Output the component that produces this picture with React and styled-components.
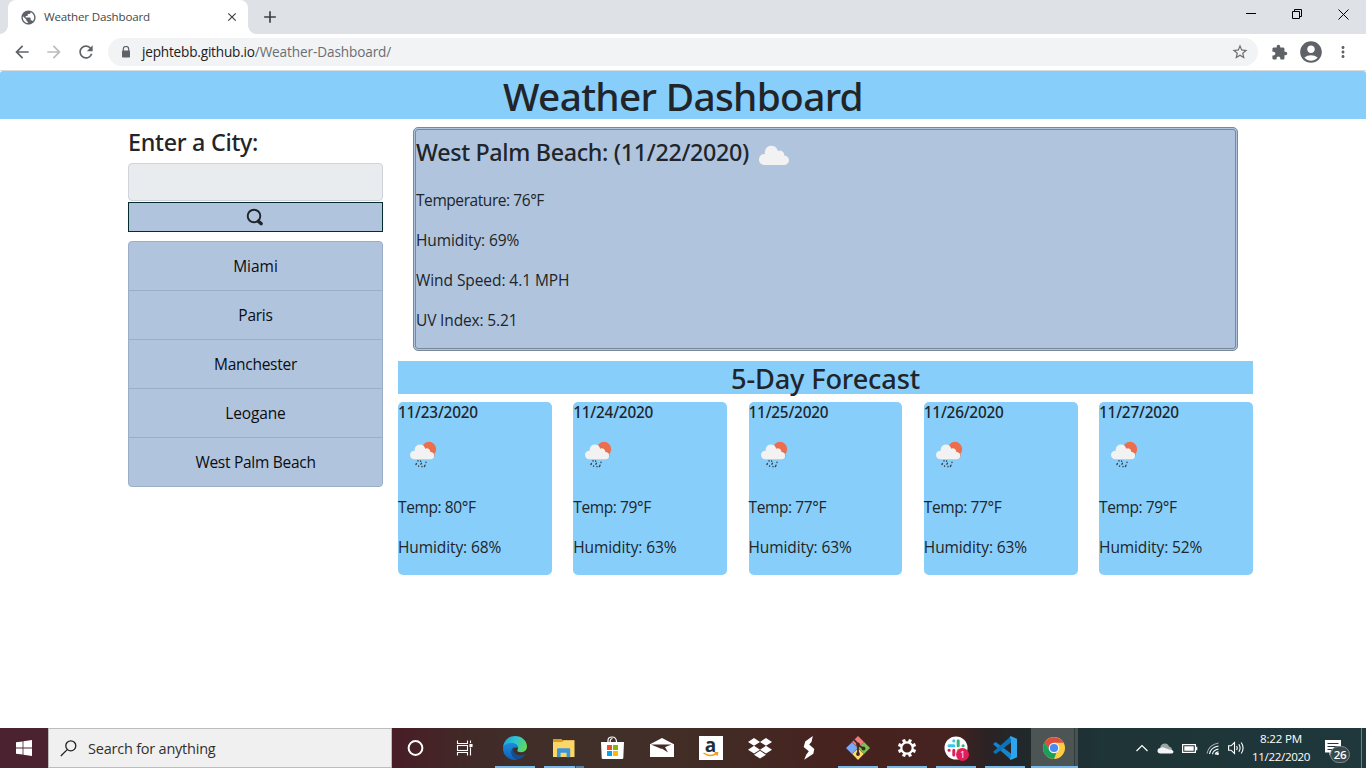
import React from "react";
import styled, { createGlobalStyle } from "styled-components";
import {
  MdArrowBack, MdArrowForward, MdRefresh, MdStarBorder, MdExtension,
  MdAccountCircle, MdMoreVert, MdClose, MdAdd, MdPublic,
} from "react-icons/md";

const GlobalStyle = createGlobalStyle`
  *, *::before, *::after { box-sizing: border-box; }
  body {
    margin: 0;
    background: #fff;
    color: #212529;
    font-family: "Open Sans", "Noto Sans", sans-serif;
    overflow: hidden;
  }
  h1, h2, h3, h5, p, ul { margin: 0; padding: 0; }
  svg { display: block; flex: none; }
`;

const Screen = styled.div`
  width: 1366px;
  height: 768px;
  display: flex;
  flex-direction: column;
`;

const Text = styled.span`
  display: inline-block;
  white-space: nowrap;
  letter-spacing: ${(p) => p.$track || 0}px;
`;

/* ---------- browser chrome ---------- */

const TabStrip = styled.div`
  height: 34px;
  background: #dee1e6;
  display: flex;
  align-items: flex-start;
  padding-left: 8px;
`;

const Tab = styled.div`
  position: relative;
  width: 240px;
  height: 34px;
  background: #fff;
  border-radius: 8px 8px 0 0;
  display: flex;
  align-items: center;
  padding: 0 9px 0 12px;
  font-size: 11.6px;
  color: #45494d;

  &::before, &::after {
    content: "";
    position: absolute;
    bottom: 0;
    width: 8px;
    height: 8px;
  }
  &::before { left: -8px; background: radial-gradient(circle at 0 0, transparent 7.5px, #fff 8px); }
  &::after { right: -8px; background: radial-gradient(circle at 100% 0, transparent 7.5px, #fff 8px); }
`;

const TabTitle = styled(Text)`
  flex: 1;
  padding: 0 0 1px 7px;
`;

const NewTab = styled.div`
  height: 34px;
  padding-left: 12px;
  display: flex;
  align-items: center;
  color: #3c4043;
`;

const WindowButtons = styled.div`
  margin-left: auto;
  display: flex;
  height: 28px;
`;

const WindowButton = styled.div`
  width: 46px;
  display: flex;
  align-items: center;
  justify-content: center;
`;

const Toolbar = styled.div`
  height: 37px;
  border-bottom: 1px solid #d9dbdd;
  display: flex;
  align-items: center;
  padding: 0 12px;
  color: #5f6368;
`;

const NavButton = styled.div`
  width: 32px;
  color: ${(p) => (p.$off ? "#babcbe" : "#5f6368")};
`;

const AddressBar = styled.div`
  width: 1150px;
  height: 28px;
  border-radius: 14px;
  background: #f1f3f4;
  display: flex;
  align-items: center;
  padding: 0 9px 0 13px;
  font-size: 13.6px;
  color: #6a6e73;
`;

const Url = styled.div`
  flex: 1;
  padding: 0 0 1px 11px;
  display: flex;
`;

const Host = styled(Text)`
  color: #202124;
`;

const ToolbarEnd = styled.div`
  flex: 1;
  display: flex;
  align-items: center;
  padding-left: 13px;
`;

const Avatar = styled.div`
  padding: 0 10px;
`;

/* ---------- page ---------- */

const Page = styled.main`
  height: 657px;
`;

const Banner = styled.h1`
  height: 48px;
  margin-bottom: 8px;
  background: #87cefa;
  border-radius: 3px 3px 0 0;
  text-align: center;
  font: 500 38.8px/51px "Noto Sans", sans-serif;
`;

const Columns = styled.div`
  display: flex;
  gap: 15px;
  padding: 0 113px 0 128px;
`;

const Sidebar = styled.aside`
  width: 255px;
`;

const SidebarTitle = styled.h3`
  height: 36px;
  font: 500 23.3px/31px "Noto Sans", sans-serif;
`;

const CityInput = styled.input`
  display: block;
  width: 100%;
  height: 38px;
  border: 1px solid #ced4da;
  border-radius: 4px;
  background: #e9ecef;
  outline: none;
`;

const SearchButton = styled.button`
  display: flex;
  align-items: center;
  justify-content: center;
  width: 100%;
  height: 30px;
  margin: 1px 0 9px;
  padding: 0 2px 0 0;
  border: 1px solid #052a2f;
  background: #b0c4de;
`;

const CityList = styled.ul`
  list-style: none;
  border: 1px solid #9cadc7;
  border-radius: 4px;
  background: #b0c4de;
  overflow: hidden;
`;

const City = styled.li`
  height: 49px;
  border-bottom: 1px solid #9cadc7;
  text-align: center;
  color: #0b0d10;
  font-size: 15.5px;
  line-height: 48px;

  &:last-child { height: 48px; border-bottom: 0; }
`;

const Content = styled.section`
  flex: 1;
`;

const Current = styled.div`
  height: 224px;
  margin: 0 15px 10px;
  border: 3px double #778899;
  border-radius: 5px;
  background: #b0c4de;
`;

const CurrentTitle = styled.h3`
  display: flex;
  align-items: flex-start;
  height: 58px;
  font: 500 23.3px/45px "Noto Sans", sans-serif;
`;

const Reading = styled.p`
  margin-bottom: 16px;
  font-size: 15.5px;
  line-height: 24px;
`;

const ForecastTitle = styled.h2`
  height: 33px;
  margin-bottom: 8px;
  background: #87cefa;
  text-align: center;
  font: 500 27.2px/36px "Noto Sans", sans-serif;
`;

const Forecast = styled.div`
  display: flex;
  justify-content: space-between;
`;

const DayCard = styled.div`
  width: 18%;
  height: 173px;
  background: #87cefa;
  border-radius: 5px;
`;

const DayDate = styled.h5`
  height: 27px;
  font: 500 15.3px/21px "Noto Sans", sans-serif;
`;

const DayIcon = styled.div`
  height: 66px;
`;

/* ---------- taskbar ---------- */

const Taskbar = styled.footer`
  height: 40px;
  display: flex;
  color: #fff;
  background: linear-gradient(90deg, #4c2230 0, #4a2230 48px, #491d26 392px, #402b28 480px, #41302a 600px,
    #432a24 740px, #47221f 830px, #45231f 950px, #2c2224 985px, #20292b 1030px, #1e3437 1100px, #1f383b 1366px);
`;

const StartButton = styled.div`
  width: 48px;
  display: flex;
  align-items: center;
  justify-content: center;
`;

const SearchBox = styled.div`
  width: 344px;
  border: 1px solid #bcbcbc;
  background: #f0f0f0;
  color: #303030;
  display: flex;
  align-items: center;
  gap: 11px;
  padding-left: 11px;
  font-size: 14.5px;
`;

const AppSlot = styled.div`
  position: relative;
  width: 49px;
  display: flex;
  align-items: center;
  justify-content: center;
  background: ${(p) => (p.$active ? "linear-gradient(90deg, transparent 2px, #4d5554 2px 45px, #2f3b3c 45px 46px, #465352 46px)" : "none")};

  &::after {
    content: "";
    position: absolute;
    bottom: 0;
    left: ${(p) => (p.$active ? 2 : 5)}px;
    width: ${(p) => (p.$active ? 47 : 40)}px;
    height: 2px;
    background: ${(p) => (p.$stacked ? "linear-gradient(90deg, #76b9ed 31px, #2f4c66 31px 32px, #527fa6 32px)" : "#76b9ed")};
    display: ${(p) => (p.$open || p.$active ? "block" : "none")};
  }
`;

const AmazonTile = styled.div`
  position: relative;
  width: 24px;
  height: 24px;
  background: #fff;
  color: #1f2f3e;
  text-align: center;
  font: 700 19px/18px "Open Sans", sans-serif;

  svg { position: absolute; left: 4px; top: 16px; }
`;

const Badge = styled.span`
  position: absolute;
  left: 25px;
  top: 20px;
  width: 13px;
  height: 13px;
  border-radius: 50%;
  background: #e01e5a;
  text-align: center;
  font-size: 9px;
  line-height: 13px;
`;

const Tray = styled.div`
  margin-left: auto;
  display: flex;
  align-items: center;
`;

const Clock = styled.div`
  width: 60px;
  margin-left: 6px;
  text-align: center;
  font-size: 11.6px;
  line-height: 18px;
  padding-bottom: 1px;
`;

const Notifications = styled.div`
  position: relative;
  width: 16px;
  margin: 0 20px 0 14px;
`;

const NoticeCount = styled.span`
  position: absolute;
  left: 5px;
  top: 6px;
  width: 20px;
  height: 17px;
  border: 1px solid #7f8b8c;
  border-radius: 8.5px;
  background: #39494b;
  text-align: center;
  font-size: 11.5px;
  font-weight: 600;
  line-height: 15px;
  letter-spacing: -0.3px;
`;

const ShowDesktop = styled.div`
  width: 5px;
  height: 40px;
  border-left: 1px solid #718082;
`;

/* ---------- drawings ---------- */

const cloudPath =
  "M5.8 20A5.4 5.4 0 0 1 0 14.2A5.3 5.3 0 0 1 6 9Q5.4 7.6 6.2 5.2A6.5 6.5 0 0 1 18.4 4.8Q19 5.6 19 6.2A4.2 4.2 0 0 1 25.2 10.6A4.8 4.8 0 0 1 30 15.4A4.7 4.7 0 0 1 25.4 20Z";

const CloudIcon = () => (
  <svg width="30" height="20" viewBox="0 0 30 20">
    <path d={cloudPath} fill="#f2f2f2" />
  </svg>
);

const CloudBox = styled.span`
  padding: 15px 0 0 10px;
`;

const RainIcon = () => (
  <svg width="50" height="50" viewBox="0 0 50 50">
    <circle cx="31" cy="20" r="7.2" fill="#ec6e4c" />
    <path d="M23.6 18.5Q26 17 28.5 20Q32 18.5 34 22Q37 24 36.6 27.5L24 26Z" fill="#ec6e4c" />
    <path transform="translate(12 15) scale(.805 .76)" d={cloudPath} fill="#f2f2f2" />
    <path d="M20 31.600v.4M18.400 34.600l-.4.900M20.600 37v.3M23.400 34.200l-.5 1M24 37.500v.2M28 33.300v.3M27 36.200l-.6 1.300M22.600 32v.2"
      stroke="#3b4047" strokeWidth="1.400" strokeLinecap="round" fill="none" />
  </svg>
);

const SearchGlyph = () => (
  <svg width="18" height="18" viewBox="0 0 18 18" fill="none" stroke="#212529">
    <circle cx="8" cy="8" r="6.3" strokeWidth="1.9" />
    <path d="M12.3 13.2L15.2 15.6" strokeWidth="3.4" strokeLinecap="round" />
  </svg>
);

const LockIcon = () => (
  <svg width="10" height="12" viewBox="0 0 10 12">
    <path d="M2.3 5V3.1a2.7 2.7 0 0 1 5.4 0V5" fill="none" stroke="#5f6368" strokeWidth="1.2" />
    <rect x="1" y="4.6" width="8" height="7" rx=".8" fill="#5f6368" />
  </svg>
);

const WindowsLogo = () => (
  <svg width="16" height="16" viewBox="0 0 16 16" fill="#fff">
    <path d="M0 2.3L6.6 1.4V7.5H0ZM7.4 1.2L16 0V7.5H7.4ZM0 8.4H6.6V14.6L0 13.7ZM7.4 8.4H16V16L7.4 14.8Z" />
  </svg>
);

const TaskSearchIcon = () => (
  <svg width="17" height="17" viewBox="0 0 17 17" fill="none" stroke="#222" strokeWidth="1.3">
    <circle cx="10.8" cy="5.8" r="5" />
    <path d="M7.2 9.6L.8 16" />
  </svg>
);

const CortanaIcon = () => (
  <svg width="19" height="18" viewBox="0 0 19 18" fill="none" stroke="#fff">
    <circle cx="8.500" cy="9" r="6.9" strokeWidth="2" />
  </svg>
);

const TaskViewIcon = () => (
  <svg width="19" height="16" viewBox="0 0 19 16" fill="none" stroke="#fff" strokeWidth="1.1">
    <path d="M1.500 .5V3.500H11.500V.5M1.500 15.5V12.500H11.500V15.5" />
    <rect x="1.500" y="5.500" width="10" height="5" />
    <path d="M14.500 .5V3M14.500 7.500V15.5" />
    <rect x="14" y="4.500" width="2" height="2" fill="#fff" />
  </svg>
);

const EdgeIcon = () => (
  <svg width="24" height="24" viewBox="0 0 24 24">
    <defs>
      <linearGradient id="edgeTop" x1="0" x2="1" y1=".2" y2=".5">
        <stop offset="0" stopColor="#1fa0dc" /><stop offset=".5" stopColor="#2fc3d3" /><stop offset="1" stopColor="#5fd95a" />
      </linearGradient>
      <linearGradient id="edgeLow" x1="0" x2="0" y1="0" y2="1">
        <stop offset="0" stopColor="#1b8ddb" /><stop offset="1" stopColor="#0f5fb4" />
      </linearGradient>
    </defs>
    <path d="M0 11.5C.6 5 5.500 0 12 0C19 0 24 5 24 10.500C24 14 21.500 16.200 18.300 16.200C15.500 16.200 14 15.200 14.300 14.200C16 12 14.500 8 10 7.600C5.500 7.300 1.500 9 0 11.500Z" fill="url(#edgeTop)" />
    <path d="M0 12C.8 8.800 4 7 7.800 7C12.500 7 15 9.600 14.900 12C12.500 10.500 8.700 12.500 8.500 16C8.300 20 11.500 23 14.500 23.700C6.500 25.200 -.4 19.500 0 12Z" fill="url(#edgeLow)" />
    <path d="M8.600 14.500C7.800 19 11.500 24.200 16 23.200C19 22.300 21.600 20.300 22.700 18C17.500 20.700 11.500 19.200 10.500 14.200C10.300 13 10.700 12 11.500 11.300C9.800 11.500 8.900 12.800 8.600 14.500Z" fill="#124f91" />
  </svg>
);

const FolderIcon = () => (
  <svg width="22" height="19" viewBox="0 0 22 19">
    <path d="M0 0H8.500L10 1.500H21V5H0Z" fill="#dc9a17" />
    <path d="M0 3H9L10.500 1.300H21.500V18H0Z" fill="#fcd667" />
    <path d="M4 18.300V10.500Q4 9.300 5.200 9.300H16Q17.200 9.300 17.200 10.500V18.300H13.600V13.800H7.600V18.300Z" fill="#3c94db" />
  </svg>
);

const StoreIcon = () => (
  <svg width="26" height="24" viewBox="0 0 26 24">
    <path d="M8 6V4.500Q8 1 12 1Q16.500 1 16.500 6M10.200 6V5Q10.500 2.500 12.500 2.500" stroke="#fff" strokeWidth="1.200" fill="none" />
    <path d="M1 6H24L23.300 22Q23.300 23 22 23H3Q1.700 23 1.700 22Z" fill="#fff" />
    <path d="M7 9H12V14H7Z" fill="#f25022" /><path d="M13 9H18V14H13Z" fill="#7fba00" />
    <path d="M7 15H12V20H7Z" fill="#00a4ef" /><path d="M13 15H18V20H13Z" fill="#ffb900" />
  </svg>
);

const MailIcon = () => (
  <svg width="24" height="20" viewBox="0 0 24 20">
    <path d="M0 6.200L12 0L24 6.200V19H0Z" fill="#fff" />
    <path d="M1 6.500H21.500L11 10.800Z" fill="#442b26" />
    <path d="M11 10L18 14.500L14.500 8Z" fill="#442b26" />
  </svg>
);

const AmazonSmile = () => (
  <svg width="16" height="6" viewBox="0 0 16 6" fill="none" stroke="#f79a1c" strokeWidth="1.500">
    <path d="M.5 1Q7 5.800 13.500 1.600M11.500 .8L14.500 .8L14 3.600" />
  </svg>
);

const DropboxIcon = () => (
  <svg width="24" height="21" viewBox="0 0 24 21" fill="#fff">
    <path d="M6 0L12 3.900L6 7.800L0 3.900ZM18 0L24 3.900L18 7.800L12 3.900ZM6 7.800L12 11.700L6 15.500L0 11.700ZM18 7.800L24 11.700L18 15.500L12 11.700ZM12 12.800L18 16.800L12 20.600L6 16.800Z" />
  </svg>
);

const BoltIcon = () => (
  <svg width="12" height="24" viewBox="0 0 12 24" fill="#fff">
    <path d="M9.800 0L8.600 5.800L6.200 8.400L11.300 13L10.300 17.800L1.200 23.700L3.200 18.800L5.800 15.300L.7 11L2.200 5.600Z" />
  </svg>
);

const GitIcon = () => (
  <svg width="24" height="24" viewBox="0 0 24 24">
    <path d="M12 0L18 6L12 12L6 6Z" fill="#f07c7c" /><path d="M6 6.200L11.700 12L6 18L0 12Z" fill="#79a8f8" />
    <path d="M18 6L24 12L18 18L12 12Z" fill="#7dc152" /><path d="M12 12.200L17.800 18L12 24L6.200 18Z" fill="#fbdc6b" />
    <path d="M8 3.800L12 8V18.500M12 9L17.500 12.500" stroke="#3d2a24" strokeWidth="1.800" fill="none" />
    <circle cx="12" cy="18" r="1.900" fill="#3d2a24" /><circle cx="17.500" cy="12.500" r="1.900" fill="#3d2a24" /><circle cx="12" cy="8.500" r="1.900" fill="#3d2a24" />
  </svg>
);

const teeth = [0, 45, 90, 135, 180, 225, 270, 315];
const GearIcon = () => (
  <svg width="20" height="20" viewBox="0 0 20 20" fill="none" stroke="#fff">
    <circle cx="10" cy="10" r="5.700" strokeWidth="2.200" />
    {teeth.map((a) => (
      <path key={a} d="M10 .8V4" strokeWidth="3.200" transform={`rotate(${a + 22.5} 10 10)`} />
    ))}
  </svg>
);

const SlackIcon = () => (
  <svg width="24" height="24" viewBox="0 0 24 24" fill="none" strokeWidth="3" strokeLinecap="round">
    <circle cx="12" cy="12" r="11.500" fill="#fff" />
    <path d="M9.800 4.800V5M5 9.800H9.800" stroke="#36c5f0" />
    <path d="M14.200 4.800V9.800M19 9.800H19.200" stroke="#2eb67d" />
    <path d="M5 14.200H5.200M9.800 14.200V19" stroke="#e01e5a" />
    <path d="M14.200 14.200H19M14.200 19V19.200" stroke="#ecb22e" />
  </svg>
);

const VsCodeIcon = () => (
  <svg width="24" height="24" viewBox="0 0 24 24">
    <path d="M1.200 6.800L3 6.200L18 17.500V23L16.800 22.800L.2 8.300Z" fill="#1485cf" />
    <path d="M1.200 17.200L3 17.800L18 6.500V1L16.800 1.200L.2 15.700Z" fill="#0b73ba" />
    <path d="M17.500 0L24 2.800V21.200L17.500 24L16.500 22.500L18 21V3L16.500 1.500Z" fill="#2fa4ec" />
  </svg>
);

const ChromeIcon = () => (
  <svg width="22" height="22" viewBox="0 0 22 22">
    <circle cx="11" cy="11" r="11" fill="#ffcd42" />
    <path d="M1.500 5.500L6.500 13.500L13.500 15.500L11 22A11 11 0 0 1 1.500 5.500Z" fill="#1b9e5c" />
    <path d="M1.500 5.500L3 3.500L10 11L6.500 13.500Z" fill="#1b9e5c" />
    <path d="M1.600 5.400A11 11 0 0 1 20.600 5.800H11Q7 6 6.200 11Z" fill="#de4d3f" />
    <circle cx="11" cy="11" r="5.300" fill="#f3f3f3" /><circle cx="11" cy="11" r="4.100" fill="#4a8af4" />
  </svg>
);

const TrayIcons = styled.div`
  display: flex;
  align-items: center;

  svg + svg { margin-left: 8px; }
`;

const apps = [
  { Icon: CortanaIcon }, { Icon: TaskViewIcon }, { Icon: EdgeIcon, open: true },
  { Icon: FolderIcon, open: true, stacked: true }, { Icon: StoreIcon }, { Icon: MailIcon },
  { Icon: () => <AmazonTile>a<AmazonSmile /></AmazonTile> },
  { Icon: DropboxIcon }, { Icon: BoltIcon }, { Icon: GitIcon, open: true }, { Icon: GearIcon, open: true },
  { Icon: () => <><SlackIcon /><Badge>1</Badge></>, open: true },
  { Icon: VsCodeIcon, open: true }, { Icon: ChromeIcon, active: true },
];

const cities = [["Miami", 0], ["Paris", -0.25], ["Manchester", -0.27], ["Leogane", -0.15], ["West Palm Beach", -0.28]];
const readings = [["Temperature: 76°F", -0.43], ["Humidity: 69%", -0.1], ["Wind Speed: 4.1 MPH", -0.07], ["UV Index: 5.21", -0.15]];
const days = [
  ["11/23/2020", 80, 68], ["11/24/2020", 79, 63], ["11/25/2020", 77, 63], ["11/26/2020", 77, 63], ["11/27/2020", 79, 52],
];

export default function App() {
  return (
    <Screen>
      <GlobalStyle />
      <TabStrip>
        <Tab>
          <MdPublic size={17} color="#5f6368" />
          <TabTitle $track={-0.18}>Weather Dashboard</TabTitle>
          <MdClose size={14} color="#3c4043" />
        </Tab>
        <NewTab><MdAdd size={20} /></NewTab>
        <WindowButtons>
          <WindowButton><svg width="10" height="10" viewBox="0 0 10 10"><path d="M0 4.500H10" stroke="#000" /></svg></WindowButton>
          <WindowButton>
            <svg width="10" height="10" viewBox="0 0 10 10" fill="none" stroke="#000"><path d="M.5 2.500H7.500V9.500H.5ZM2.500 2.500V.5H9.500V7.500H7.500" /></svg>
          </WindowButton>
          <WindowButton><svg width="11" height="11" viewBox="0 0 11 11"><path d="M.5 .5L10.500 10.500M10.500 .5L.5 10.500" stroke="#000" /></svg></WindowButton>
        </WindowButtons>
      </TabStrip>
      <Toolbar>
        <NavButton><MdArrowBack size={20} /></NavButton>
        <NavButton $off><MdArrowForward size={20} /></NavButton>
        <NavButton><MdRefresh size={20} /></NavButton>
        <AddressBar>
          <LockIcon />
          <Url>
            <Host $track={-0.19}>jephtebb.github.io</Host>
            <Text $track={-0.12}>/Weather-Dashboard/</Text>
          </Url>
          <MdStarBorder size={18} />
        </AddressBar>
        <ToolbarEnd>
          <MdExtension size={17} />
          <Avatar><MdAccountCircle size={26} /></Avatar>
          <MdMoreVert size={18} />
        </ToolbarEnd>
      </Toolbar>

      <Page>
        <Banner><Text $track={-0.68}>Weather Dashboard</Text></Banner>
        <Columns>
          <Sidebar>
            <SidebarTitle><Text $track={-0.28}>Enter a City:</Text></SidebarTitle>
            <CityInput />
            <SearchButton><SearchGlyph /></SearchButton>
            <CityList>
              {cities.map(([name, track]) => <City key={name}><Text $track={track}>{name}</Text></City>)}
            </CityList>
          </Sidebar>
          <Content>
            <Current>
              <CurrentTitle>
                <Text $track={-0.33}>West Palm Beach: (11/22/2020)</Text>
                <CloudBox><CloudIcon /></CloudBox>
              </CurrentTitle>
              {readings.map(([label, track]) => <Reading key={label}><Text $track={track}>{label}</Text></Reading>)}
            </Current>
            <ForecastTitle><Text $track={-0.16}>5-Day Forecast</Text></ForecastTitle>
            <Forecast>
              {days.map(([date, temp, humidity]) => (
                <DayCard key={date}>
                  <DayDate><Text $track={-0.2}>{date}</Text></DayDate>
                  <DayIcon><RainIcon /></DayIcon>
                  <Reading><Text $track={-0.4}>Temp: {temp}°F</Text></Reading>
                  <Reading><Text $track={-0.1}>Humidity: {humidity}%</Text></Reading>
                </DayCard>
              ))}
            </Forecast>
          </Content>
        </Columns>
      </Page>

      <Taskbar>
        <StartButton><WindowsLogo /></StartButton>
        <SearchBox><TaskSearchIcon /><Text $track={-0.22}>Search for anything</Text></SearchBox>
        {apps.map(({ Icon, open, stacked, active }, i) => (
          <AppSlot key={i} $open={open} $stacked={stacked} $active={active}><Icon /></AppSlot>
        ))}
        <Tray>
          <TrayIcons>
            <svg width="14" height="8" viewBox="0 0 14 8"><path d="M1.500 7L7 1.500L12.500 7" fill="none" stroke="#fff" strokeWidth="1.200" /></svg>
            <svg width="17" height="11" viewBox="0 0 17 11">
              <path d="M3 6Q3 1 7.500 .5Q11 .3 12 3.500Q15 4 15 7L6 9Z" fill="#9aa5a7" />
              <path d="M3.500 10.500Q.5 10.500 .5 7.800Q.5 5.200 3.500 5Q5.500 3.500 8 5L12 6.500Q16.500 6.500 16.500 9Q16 10.500 14.500 10.500Z" fill="#f4f4f4" />
            </svg>
            <svg width="16" height="9" viewBox="0 0 16 9"><path d="M.6 .6H13.400V8.400H.6Z" fill="none" stroke="#fff" strokeWidth="1.200" /><path d="M2.300 2.300H11.700V6.700H2.300ZM13.500 2.800H15.300V6.200H13.500Z" fill="#fff" /></svg>
            <svg width="14" height="13" viewBox="0 0 14 13" fill="none" stroke="#fff" strokeWidth="1.100">
              <path d="M1 11.500Q2.500 3 12.500 1" stroke="#aab3b4" /><path d="M3.500 12Q4.500 5.500 12.500 4M6.500 12.300Q7 8 12.500 7M9.300 12.500Q9.500 10.300 12.500 9.800" />
              <circle cx="11.500" cy="11.800" r=".8" fill="#fff" />
            </svg>
            <svg width="17" height="14" viewBox="0 0 17 14" fill="none" stroke="#fff" strokeWidth="1.100">
              <path d="M.6 4.800H3L6.500 1.500V12.500L3 9.200H.6Z" /><path d="M8.500 5Q10 7 8.500 9M10.800 3.200Q13.400 7 10.800 10.800M13.200 1.500Q17 7 13.200 12.500" />
            </svg>
          </TrayIcons>
          <Clock><Text $track={-0.2}>8:22 PM</Text><Text $track={-0.33}>11/22/2020</Text></Clock>
          <Notifications>
            <svg width="16" height="16" viewBox="0 0 16 16"><path d="M0 0H16V12.500H8L4.500 15.500V12.500H0Z" fill="#fff" /><path d="M2.500 3.500H13.500M2.500 6.500H13.500M2.500 9.500H9" stroke="#1f383b" /></svg>
            <NoticeCount>26</NoticeCount>
          </Notifications>
          <ShowDesktop />
        </Tray>
      </Taskbar>
    </Screen>
  );
}
